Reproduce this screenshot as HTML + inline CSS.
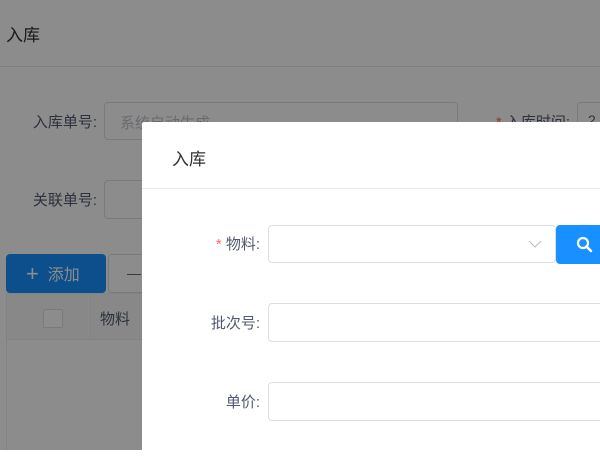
<!DOCTYPE html>
<html><head><meta charset="utf-8"><style>
*{box-sizing:border-box;margin:0;padding:0}
body{width:600px;height:450px;overflow:hidden;position:relative;background:#fff;font-family:"Liberation Sans","Noto Sans CJK SC",sans-serif;font-size:14px;color:#333}
.a{position:absolute}
.inp{position:absolute;border:1px solid #dcdfe6;border-radius:4px;background:#fff}
.lbl{position:absolute;text-align:right;color:#515a6e;font-size:15px}
.ov{position:absolute;left:0;top:0;width:600px;height:450px;background:rgba(0,0,0,0.45)}
</style></head><body>
<div class="a" style="left:6px;top:21px;font-size:17px;color:#303133">入库</div>
<div class="a" style="left:0;top:66px;width:600px;height:1px;background:#e4e7ed"></div>
<div class="lbl" style="left:6px;top:111px;width:91px">入库单号:</div>
<div class="inp" style="left:104px;top:102px;width:354px;height:38px"><span style="position:absolute;left:15px;top:9px;color:#c0c4cc;font-size:15px">系统自动生成</span></div>
<div class="lbl" style="left:466px;top:111px;width:104px"><span style="color:#f56c6c">*</span> 入库时间:</div>
<div class="inp" style="left:577px;top:102px;width:60px;height:38px"><span style="position:absolute;left:10px;top:9px;color:#606266">2</span></div>
<div class="lbl" style="left:6px;top:189px;width:91px">关联单号:</div>
<div class="inp" style="left:104px;top:180px;width:354px;height:39px"></div>
<div class="a" style="left:6px;top:254px;width:100px;height:39px;background:#1890ff;border-radius:4px;color:#fff;font-size:16px;line-height:39px;padding-left:20px"><span style="font-size:22px;vertical-align:-1px">+</span>&nbsp; 添加</div>
<div class="a" style="left:108px;top:254px;width:60px;height:39px;background:#fff;border:1px solid #dcdfe6;border-radius:4px;color:#606266;padding-left:18px;line-height:37px">—</div>
<div class="a" style="left:6px;top:293px;width:600px;height:47px;background:#f8f8f9;border:1px solid #ebeef5"></div>
<div class="a" style="left:43px;top:309px;width:20px;height:19px;border:1px solid #dcdfe6;border-radius:2px;background:#fff"></div>
<div class="a" style="left:90px;top:293px;width:1px;height:47px;background:#ebeef5"></div>
<div class="a" style="left:100px;top:308px;color:#515a6e;font-size:15px">物料</div>
<div class="a" style="left:6px;top:340px;width:1px;height:110px;background:#ebeef5"></div>
<div class="ov"></div>
<div class="a" style="left:142px;top:122px;width:470px;height:340px;background:#fff;border-radius:2px">
 <div class="a" style="left:30px;top:23px;font-size:17px;color:#303133">入库</div>
 <div class="a" style="left:0;top:66px;width:470px;height:1px;background:#e8eaec"></div>
</div>
<div class="lbl" style="left:166px;top:233px;width:94px"><span style="color:#f56c6c">*</span> 物料:</div>
<div class="inp" style="left:268px;top:225px;width:288px;height:38px">
 <svg class="a" style="left:259px;top:14px" width="14" height="9" viewBox="0 0 14 9"><path d="M1 1 L7 7 L13 1" fill="none" stroke="#c0c4cc" stroke-width="1.2"/></svg>
</div>
<div class="a" style="left:556px;top:225px;width:60px;height:39px;background:#1890ff;border-radius:4px">
 <svg class="a" style="left:20px;top:11px" width="17" height="17" viewBox="0 0 17 17"><circle cx="7" cy="7" r="5" fill="none" stroke="#fff" stroke-width="2.2"/><path d="M10.5 10.5 L15 15" stroke="#fff" stroke-width="2.6" stroke-linecap="round"/></svg>
</div>
<div class="lbl" style="left:166px;top:312px;width:94px">批次号:</div>
<div class="inp" style="left:268px;top:303px;width:340px;height:39px"></div>
<div class="lbl" style="left:166px;top:391px;width:94px">单价:</div>
<div class="inp" style="left:268px;top:382px;width:340px;height:39px"></div>
</body></html>
